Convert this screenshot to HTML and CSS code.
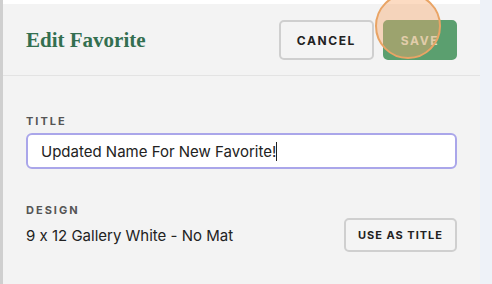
FILE: index.html
```html
<!DOCTYPE html>
<html lang="en">
<head>
  <meta charset="UTF-8">
  <meta name="viewport" content="width=device-width, initial-scale=1.0">
  <title>Edit Favorite</title>
  <link rel="stylesheet" href="styles.css">
</head>
<body>

  <div class="page">
    <div class="side-bar"></div>

    <div class="panel">
      <div class="top-strip"></div>

      <div class="panel-header">
        <h2>Edit Favorite</h2>
        <div class="actions">
          <button class="btn">Cancel</button>
          <button class="btn btn-save">Save</button>
          <span class="click-ring"></span>
        </div>
      </div>

      <div class="panel-body">
        <label class="field-label" for="title">Title</label>
        <div class="title-input">
          <span class="title-text">Updated Name For New Favorite!</span><span class="caret"></span>
        </div>

        <div class="design-row">
          <div class="design-info">
            <div class="field-label">Design</div>
            <div class="design-name">9 x 12 Gallery White - No Mat</div>
          </div>
          <button class="btn btn-small">Use as title</button>
        </div>
      </div>
    </div>

    <div class="right-strip"></div>
  </div>

</body>
</html>
```

FILE: styles.css
```css
body {
  margin: 0;
  font-family: 'Inter', 'Liberation Sans', sans-serif;
  font-feature-settings: "calt" 0;
  background-color: #eef2f8;
  color: #222;
}
.page {
  display: flex;
  height: 284px;
  overflow: hidden;
}
.side-bar {
  width: 3px;
  background-color: #cfcfcf;
}
.panel {
  width: 477px;
  background-color: #f3f3f3;
}
.right-strip {
  flex: 1;
  background-color: #eef2f8;
}
.top-strip {
  height: 4px;
  background-color: #fff;
}
.panel-header {
  display: flex;
  justify-content: space-between;
  align-items: center;
  padding: 16px 23px 15px 23px;
  border-bottom: 1px solid #e3e3e3;
}
h2 {
  margin: 0;
  font-family: 'Liberation Serif', serif;
  font-size: 21px;
  font-weight: bold;
  color: #336f50;
}
.actions {
  position: relative;
  display: flex;
  gap: 9px;
}
.btn {
  font-family: 'Inter', 'Liberation Sans', sans-serif;
  font-size: 12px;
  font-weight: 700;
  letter-spacing: 1.6px;
  text-transform: uppercase;
  color: #222;
  background-color: #f4f4f4;
  border: 2px solid #cfcfcf;
  border-radius: 5px;
  height: 40px;
  padding: 0 16px;
  cursor: pointer;
}
.btn-save {
  width: 74px;
  padding: 0;
  background-color: #5b9f6f;
  border-color: #5b9f6f;
  color: #d2e6d6;
}
.click-ring {
  position: absolute;
  left: 96px;
  top: -27px;
  width: 62px;
  height: 62px;
  border-radius: 50%;
  border: 2px solid #e9a465;
  background-color: rgba(247, 170, 110, 0.42);
}
.panel-body {
  padding: 38px 23px 0 23px;
}
.field-label {
  display: block;
  font-size: 11px;
  line-height: 14px;
  font-weight: 700;
  letter-spacing: 2px;
  text-transform: uppercase;
  color: #555;
}
.title-input {
  display: flex;
  align-items: center;
  margin-top: 5px;
  height: 32px;
  padding: 0 13px;
  background-color: #fff;
  border: 2px solid #aaa6ea;
  border-radius: 6px;
  font-size: 15px;
}
.caret {
  display: inline-block;
  width: 1px;
  height: 19px;
  background-color: #222;
}
.design-row {
  display: flex;
  justify-content: space-between;
  align-items: flex-end;
  margin-top: 34px;
}
.design-name {
  margin-top: 9px;
  font-size: 15px;
  line-height: 20px;
}
.btn-small {
  height: 34px;
  font-size: 11px;
  letter-spacing: 1px;
  padding: 0 12px;
  margin-bottom: -6px;
}
```
